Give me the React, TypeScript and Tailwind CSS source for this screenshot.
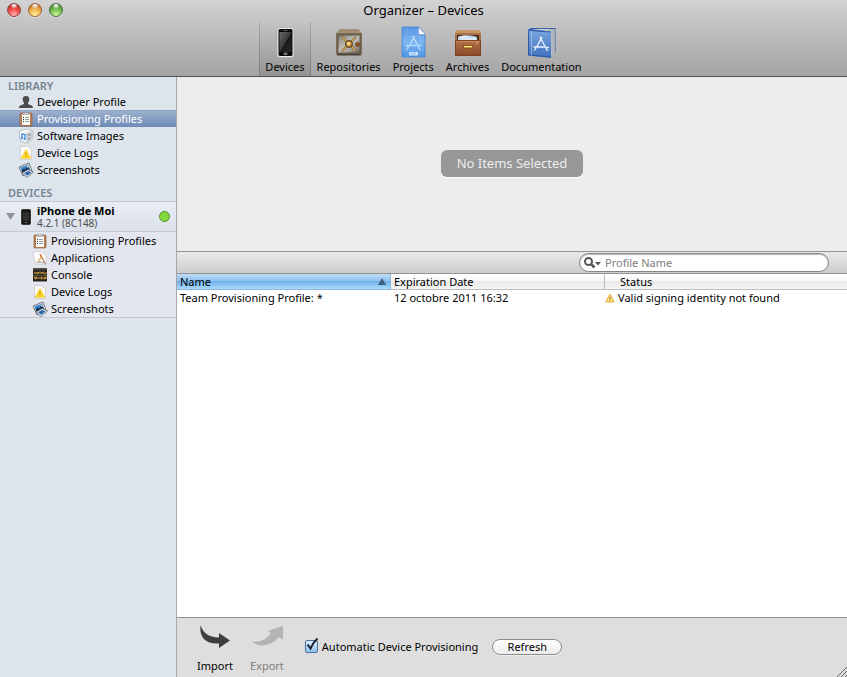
import { useState } from 'react';
import type { ReactNode } from 'react';
import clsx from 'clsx';

interface IconProps {
  className?: string;
}

interface NavItem {
  id: string;
  label: string;
  icon: ReactNode;
}

function DeviceIcon() {
  return (
    <svg viewBox="0 0 34 34" className="size-[34px]" aria-hidden="true">
      <defs>
        <linearGradient id="phone-screen" x1="0" y1="0" x2="1" y2="1">
          <stop offset="0" stopColor="#6a6a6a" />
          <stop offset="0.5" stopColor="#3a3a3a" />
          <stop offset="0.52" stopColor="#1a1a1a" />
          <stop offset="1" stopColor="#262626" />
        </linearGradient>
      </defs>
      <rect x="9" y="2.500" width="17" height="30" rx="3" fill="#e4e9ee" stroke="#a7abb0" strokeWidth="0.7" />
      <rect x="10.500" y="4" width="14" height="27" rx="1.500" fill="#0b0b0b" />
      <rect x="11.500" y="7" width="12" height="20" fill="url(#phone-screen)" />
      <rect x="15.500" y="5" width="4" height="1" fill="#555" />
      <rect x="16" y="28" width="3" height="1.5" rx="0.5" fill="none" stroke="#bbb" strokeWidth="0.8" />
    </svg>
  );
}

function SafeIcon() {
  return (
    <svg viewBox="0 0 34 34" className="size-[34px]" aria-hidden="true">
      <defs>
        <linearGradient id="safe-door" x1="0" y1="0" x2="1" y2="1">
          <stop offset="0" stopColor="#85817a" />
          <stop offset="0.5" stopColor="#c6c3bd" />
          <stop offset="1" stopColor="#6f6b64" />
        </linearGradient>
      </defs>
      <path d="M7.500 4h19L30 8.500H4z" fill="#a08f74" />
      <path d="M4 8h26v21.500H4z" fill="#7d6e55" />
      <path d="M5 29h24v1.500H5z" fill="#4b4436" />
      <rect x="6" y="10" width="22" height="18" fill="url(#safe-door)" stroke="#4f483b" strokeWidth="0.800" />
      <g stroke="#4a3a20" strokeWidth="2.200" strokeLinecap="round">
        <path d="M10.500 12.500l13 13M23.500 12.500l-13 13" />
      </g>
      <g stroke="#e9b95c" strokeWidth="1.400" strokeLinecap="round">
        <path d="M10.500 12.500l13 13M23.500 12.500l-13 13" />
      </g>
      <circle cx="17" cy="19" r="3.400" fill="#d49a3a" stroke="#3a2e1c" />
      <circle cx="16.500" cy="18.500" r="1.400" fill="#ffe5a0" />
      <circle cx="25.500" cy="19.500" r="1.900" fill="#a05a24" stroke="#4a2a12" strokeWidth="0.700" />
    </svg>
  );
}

function BlueprintIcon() {
  return (
    <svg viewBox="0 0 34 34" className="size-[34px]" aria-hidden="true">
      <defs>
        <linearGradient id="blueprint" x1="0" y1="0" x2="0" y2="1">
          <stop offset="0" stopColor="#5a96e2" />
          <stop offset="0.5" stopColor="#7ab4f2" />
          <stop offset="1" stopColor="#4a94e6" />
        </linearGradient>
      </defs>
      <path d="M6 2h17l6 7v23H6z" fill="url(#blueprint)" stroke="#4a82cc" strokeWidth="0.800" />
      <path d="M22.500 2l7 7.500H24q-1.500 0-1.500-1.500z" fill="#f6faff" stroke="#6590c8" strokeWidth="0.500" />
      <g stroke="#8fbff3" strokeWidth="0.400">
        <path d="M6 12h22M6 25h22M11 3v29M24 10v22" />
      </g>
      <g stroke="#b9d8fb" strokeWidth="1.500" fill="none">
        <path d="M16.500 11l7.500 13.500M18.500 11l-5 9.500M12.500 21.500L11 24.500M9.500 20.500h11M22.500 20.500h3" />
      </g>
      <path d="M13 27h9v3.500h-9z" fill="#cfe4fd" />
      <path d="M15 27.500v2M17 28v2M19 27.500v2" stroke="#6ca5e8" strokeWidth="0.800" />
    </svg>
  );
}

function CabinetIcon() {
  return (
    <svg viewBox="0 0 34 34" className="size-[34px]" aria-hidden="true">
      <defs>
        <linearGradient id="drawer" x1="0" y1="0" x2="0" y2="1">
          <stop offset="0" stopColor="#b5734a" />
          <stop offset="1" stopColor="#8c4a28" />
        </linearGradient>
      </defs>
      <path d="M6 5h22l2 3.500V31H4V8.500z" fill="#a96f47" />
      <path d="M6 5h22l1.500 3H4.500z" fill="#c9966a" />
      <path d="M6 10h22v6H6z" fill="#4d3020" />
      <path d="M7 15.500V12q1-1 3-1l3-.8 6 .3 3 .5q3 0 4 1.500v3z" fill="#c3daf0" />
      <path d="M8.500 12.500q5-1.500 9-.5M11 14h14" stroke="#fff" strokeWidth="0.900" fill="none" />
      <rect x="4.500" y="15.500" width="25" height="15" fill="url(#drawer)" stroke="#7c4424" />
      <path d="M5 16.500h24" stroke="#cf9367" strokeWidth="0.700" />
      <rect x="12.500" y="20.500" width="9" height="2.500" fill="#f4c341" stroke="#7a4511" strokeWidth="0.700" />
      <path d="M13 21.500h8" stroke="#fff0a8" strokeWidth="0.800" />
      <circle cx="26" cy="18" r="0.700" fill="#eccbaa" />
    </svg>
  );
}

function BookIcon() {
  return (
    <svg viewBox="0 0 34 34" className="size-[34px]" aria-hidden="true">
      <defs>
        <linearGradient id="book-cover" x1="0" y1="0" x2="0" y2="1">
          <stop offset="0" stopColor="#7aa5dd" />
          <stop offset="1" stopColor="#3e70bf" />
        </linearGradient>
        <linearGradient id="book-pages" x1="0" y1="0" x2="1" y2="0">
          <stop offset="0" stopColor="#fff" />
          <stop offset="1" stopColor="#a9adb2" />
        </linearGradient>
      </defs>
      <path d="M4 4.500l3-1.500h24.500V27.500l-4 3z" fill="#355fa8" />
      <path d="M8 4h23v24l-4 3.500V6.500z" fill="url(#book-pages)" />
      <path d="M4 5l23 1.500V33L4 30.500z" fill="url(#book-cover)" />
      <path d="M4.500 5.500v24.500l22 2" stroke="#2e58a2" fill="none" />
      <path d="M5 5.500l21.500 1.500" stroke="#2f5ea9" />
      <path d="M7.500 6v24.500" stroke="#9fc2ec" strokeWidth="0.800" />
      <g stroke="#eaf3ff" strokeWidth="1.400" fill="none">
        <path d="M16 12l7.500 14M18 12l-5 9.500M12 23l-1.500 2.500M9.500 22h11M22.500 22.500h2.500" />
      </g>
    </svg>
  );
}

function PersonIcon() {
  return (
    <svg viewBox="0 0 16 16" className="size-4 shrink-0" aria-hidden="true">
      <path
        d="M8 2c2.500 0 3.500 1.500 3.300 4-.2 1.500-.8 2-1.300 3v1c2 1 5 1 5 4H1c0-3 3-3 5-4V9C5.500 8 4.900 7.500 4.700 6 4.500 3.500 5.500 2 8 2z"
        fill="#4b4b4d"
      />
    </svg>
  );
}

function ClipboardIcon() {
  return (
    <svg viewBox="0 0 16 16" className="size-4 shrink-0" aria-hidden="true">
      <rect x="2" y="2" width="12" height="13" rx="1" fill="#b87c56" stroke="#9c6242" strokeWidth="0.700" />
      <path d="M4 3h8v11H4z" fill="#fbfbf8" />
      <path d="M5 3.500V2h2q1-2 2 0h2v1.500z" fill="#d4d6d9" stroke="#87898d" strokeWidth="0.500" />
      <path d="M5 6.500h1M5 8.500h1M5 10.500h1" stroke="#333" />
      <path d="M7 6.500h4M7 8.500h4M7 10.500h4" stroke="#9a9a9a" />
    </svg>
  );
}

function ImageBoxIcon() {
  return (
    <svg viewBox="0 0 16 16" className="size-4 shrink-0" aria-hidden="true">
      <path d="M1 3l7-2 7 2-1 8.500L8 15.500 2 12z" fill="#f3f5f8" stroke="#a4a9af" strokeWidth="0.700" />
      <path d="M8 5l6.500-2-.8 8.300L8 15z" fill="#ccd1d7" />
      <path d="M10 6.500l2.500-.8-.3 5L10 12z" fill="#8a929c" />
      <path d="M10.500 8l1.500-.5v2l-1.500.6z" fill="#eceff2" />
      <path d="M4 10V6l3 .5V11" stroke="#2f83dd" strokeWidth="1.200" fill="none" />
      <circle cx="3.700" cy="10.300" r="1" fill="#2f83dd" />
      <circle cx="6.500" cy="11" r="1" fill="#2f83dd" />
    </svg>
  );
}

function LogIcon() {
  return (
    <svg viewBox="0 0 16 16" className="size-4 shrink-0" aria-hidden="true">
      <path d="M2.500 1.500h8l3 3v10h-11z" fill="#fcfcfa" stroke="#d2d3d2" />
      <path d="M10.500 1.500v3h3z" fill="#dedede" />
      <path d="M8 4.500l4.800 8.700H3.200z" fill="#ffd92b" stroke="#f5c722" strokeWidth="0.700" />
      <path d="M8 7.500v3M8 11.300v1" stroke="#b08a18" />
    </svg>
  );
}

function PhotosIcon() {
  return (
    <svg viewBox="0 0 16 16" className="size-4 shrink-0" aria-hidden="true">
      <path d="M1 5l10-4 3 8-9 5z" fill="#f4f5f6" stroke="#4f545b" strokeWidth="0.800" />
      <path d="M2.300 5.600l8-3.200 2.300 6.200-7.200 3.900z" fill="#3b84cf" />
      <path d="M3.500 8.500l2.500-2 1.500 1 1.500-3 3 4-6.500 3.800z" fill="#142c4c" />
      <circle cx="9.600" cy="4.600" r="1" fill="#f3d9a6" />
      <path d="M4 11l6-3.500 5.500 2.500L9 15.500z" fill="#e9edf0" stroke="#4f545b" strokeWidth="0.700" />
      <path d="M6 11.200l4-2.300 3.500 1.500-4.300 3.300z" fill="#2b66a9" />
    </svg>
  );
}

function AppsIcon() {
  return (
    <svg viewBox="0 0 16 16" className="size-4 shrink-0" aria-hidden="true">
      <path d="M1 2l8-.5 5 4 .5 9-11-.5z" fill="#fdfdfd" stroke="#c5c5c8" strokeWidth="0.700" />
      <path d="M8.500 5l5 9" stroke="#c49a6a" strokeWidth="1.600" />
      <path d="M9.500 7L5 13" stroke="#d9a548" strokeWidth="1.200" />
      <path d="M6 12l8 1" stroke="#b3b3b8" strokeWidth="1.300" />
      <path d="M8 4l1.500 3" stroke="#d9704f" strokeWidth="1.300" />
    </svg>
  );
}

function ConsoleIcon() {
  return (
    <svg viewBox="0 0 16 16" className="size-4 shrink-0" aria-hidden="true">
      <rect x="1" y="1" width="14" height="14" fill="#23221e" />
      <path d="M1 2h14" stroke="#77756f" />
      <path d="M2 7l1-2 1 2 1-2v2h1V5l1 2V5h2v2l1-2 1 2V5h1v2h2V5" stroke="#b98a35" strokeWidth="0.900" fill="none" />
      <path d="M2 10h1v2h1v-2h1v2M7 10v2M9 10h1v2H9zM12 10v2h1v-2h1v2" stroke="#d9a136" fill="none" />
      <path d="M1 8.500h14" stroke="#57503c" />
      <path d="M1 14.500h14" stroke="#8b8980" />
    </svg>
  );
}

function MiniPhoneIcon() {
  return (
    <svg viewBox="0 0 10 16" className="h-4 w-[10px] shrink-0" aria-hidden="true">
      <rect x="0.500" y="0.500" width="9" height="15" rx="1" fill="#161616" stroke="#3a3a3a" />
      <rect x="2" y="3" width="6" height="9" fill="#2f2f2f" />
      <path d="M4 13.500h2" stroke="#777" />
    </svg>
  );
}

function WarningIcon() {
  return (
    <svg viewBox="0 0 10 10" className="size-[10px] shrink-0" aria-hidden="true">
      <path d="M5 1l4.200 8H0.800z" fill="#ffe08a" stroke="#e8a93a" strokeLinejoin="round" />
      <path d="M5 3.800v2.400M5 7.200v1" stroke="#8a6420" />
    </svg>
  );
}

function ImportIcon({ className }: IconProps) {
  return (
    <svg viewBox="0 0 32 26" className={className} aria-hidden="true">
      <path d="M1.500 1C4 9 9 13 20 13.500V9l11 7.500L20 24v-4.500C7 20 0 14 1.500 1z" fill="currentColor" />
    </svg>
  );
}

function ExportIcon({ className }: IconProps) {
  return (
    <svg viewBox="0 0 32 26" className={className} aria-hidden="true">
      <path d="M1 17.500c9 1 14-2 19-8.500l-3.500-2L32 2v14l-4-3C21 21 9 25 1 17.500z" fill="currentColor" />
    </svg>
  );
}

const toolbar: NavItem[] = [
  { id: 'devices', label: 'Devices', icon: <DeviceIcon /> },
  { id: 'repositories', label: 'Repositories', icon: <SafeIcon /> },
  { id: 'projects', label: 'Projects', icon: <BlueprintIcon /> },
  { id: 'archives', label: 'Archives', icon: <CabinetIcon /> },
  { id: 'documentation', label: 'Documentation', icon: <BookIcon /> },
];

const library: NavItem[] = [
  { id: 'developer', label: 'Developer Profile', icon: <PersonIcon /> },
  { id: 'profiles', label: 'Provisioning Profiles', icon: <ClipboardIcon /> },
  { id: 'images', label: 'Software Images', icon: <ImageBoxIcon /> },
  { id: 'logs', label: 'Device Logs', icon: <LogIcon /> },
  { id: 'screenshots', label: 'Screenshots', icon: <PhotosIcon /> },
];

const deviceItems: NavItem[] = [
  { id: 'device-profiles', label: 'Provisioning Profiles', icon: <ClipboardIcon /> },
  { id: 'device-apps', label: 'Applications', icon: <AppsIcon /> },
  { id: 'device-console', label: 'Console', icon: <ConsoleIcon /> },
  { id: 'device-logs', label: 'Device Logs', icon: <LogIcon /> },
  { id: 'device-screenshots', label: 'Screenshots', icon: <PhotosIcon /> },
];

const profiles = [
  {
    name: 'Team Provisioning Profile: *',
    expires: '12 octobre 2011 16:32',
    status: 'Valid signing identity not found',
  },
];

function WindowControls() {
  const base = 'size-[14px] rounded-full border shadow-[0_1px_0_#ddd]';
  return (
    <div className="absolute left-[7px] top-[3px] flex gap-[7px]">
      <button
        aria-label="Close"
        className={clsx(
          base,
          'border-[#8a4540] bg-[radial-gradient(circle_at_50%_10%,#fff_5%,transparent_30%),radial-gradient(circle_at_50%_90%,#ffb5b0,#f04641_50%,#8d2a20)]'
        )}
      />
      <button
        aria-label="Minimize"
        className={clsx(
          base,
          'border-[#a06238] bg-[radial-gradient(circle_at_50%_10%,#fff_5%,transparent_30%),radial-gradient(circle_at_50%_90%,#fff09a,#f0b048_50%,#a04c20)]'
        )}
      />
      <button
        aria-label="Zoom"
        className={clsx(
          base,
          'border-[#47713a] bg-[radial-gradient(circle_at_50%_10%,#fff_5%,transparent_30%),radial-gradient(circle_at_50%_90%,#cef59b,#72bd50_50%,#2e6423)]'
        )}
      />
    </div>
  );
}

function SidebarRow({
  item,
  nested,
  selected,
  onSelect,
}: {
  item: NavItem;
  nested?: boolean;
  selected: boolean;
  onSelect: (id: string) => void;
}) {
  return (
    <li>
      <button
        onClick={() => onSelect(item.id)}
        className={clsx(
          'flex h-[17px] w-full items-center gap-[3px] whitespace-nowrap text-left',
          nested ? 'pl-8' : 'pl-[18px]',
          selected &&
            'bg-linear-to-b from-[#a0b2cf] to-[#6e8bb7] text-white shadow-[inset_0_1px_0_#8fa5c6]'
        )}
      >
        {item.icon}
        {item.label}
      </button>
    </li>
  );
}

export default function App() {
  const [section, setSection] = useState('devices');
  const [selected, setSelected] = useState('profiles');
  const [query, setQuery] = useState('');
  const [automatic, setAutomatic] = useState(true);

  const visible = profiles.filter((p) => p.name.toLowerCase().includes(query.toLowerCase()));

  return (
    <div className="flex min-h-screen flex-col bg-[#ededed] font-['Noto_Sans',sans-serif] text-[11px] leading-4 text-black">
      <header className="relative border-b border-[#515151] bg-linear-to-b from-[#d2d2d2] to-[#a4a4a4]">
        <WindowControls />
        <h1 className="h-[22px] text-center text-[13px] leading-5">Organizer – Devices</h1>
        <nav className="flex h-[54px] justify-center">
          {toolbar.map((item) => (
            <button
              key={item.id}
              onClick={() => setSection(item.id)}
              className={clsx(
                'flex flex-col items-center border-x px-[5px] pt-[3px]',
                section === item.id
                  ? 'border-black/15 bg-linear-to-b from-transparent to-black/10'
                  : 'border-transparent'
              )}
            >
              {item.icon}
              <span>{item.label}</span>
            </button>
          ))}
        </nav>
      </header>

      <div className="flex flex-1">
        <aside className="w-[177px] shrink-0 border-r border-[#a8a8a8] bg-[#dde4ec]">
          <h2 className="h-4 pl-2 font-semibold leading-[18px] text-[#768493]">LIBRARY</h2>
          <ul>
            {library.map((item) => (
              <SidebarRow key={item.id} item={item} selected={selected === item.id} onSelect={setSelected} />
            ))}
          </ul>

          <h2 className="mt-[6px] h-[17px] pl-2 font-semibold leading-[18px] text-[#768493]">DEVICES</h2>
          <section className="border-y border-[#c3c7cd] bg-[#e3e6ee]">
            <div className="flex h-[30px] items-center border-b border-[#c9ccd2] bg-linear-to-b from-[#e9edf4] to-[#dbe1ea] px-[6px]">
              <button aria-label="Collapse iPhone de Moi" className="mr-[6px]">
                <svg viewBox="0 0 9 7" className="h-[7px] w-[9px]" aria-hidden="true">
                  <path d="M0 0h9L4.500 7z" fill="#8b939d" />
                </svg>
              </button>
              <MiniPhoneIcon />
              <div className="ml-[6px] flex-1">
                <p className="font-bold leading-3">iPhone de Moi</p>
                <p className="text-[10px] leading-3 text-[#4d4d4d]">4.2.1 (8C148)</p>
              </div>
              <span className="size-[11px] rounded-full border border-[#558b35] bg-[#83d83c]" />
            </div>
            <ul>
              {deviceItems.map((item) => (
                <SidebarRow
                  key={item.id}
                  item={item}
                  nested
                  selected={selected === item.id}
                  onSelect={setSelected}
                />
              ))}
            </ul>
          </section>
        </aside>

        <main className="flex min-w-0 flex-1 flex-col">
          <div className="flex h-[174px] items-center justify-center pb-[2px]">
            <p className="rounded-md bg-[#979797] px-4 text-[13px] leading-[27px] text-[#ededed] shadow-[0_1px_0_#fff]">
              No Items Selected
            </p>
          </div>

          <div className="flex h-[23px] items-center justify-end border-y border-[#949494] bg-linear-to-b from-[#eaeaea] to-[#cdcdcd] pr-[18px]">
            <label className="flex h-[19px] w-[250px] items-center rounded-full border border-[#858585] bg-white pl-1 shadow-[inset_0_1px_1px_#bbb]">
              <svg viewBox="0 0 18 12" className="h-3 w-[18px] shrink-0" aria-hidden="true">
                <circle cx="4.500" cy="4.500" r="3.500" fill="none" stroke="#555" strokeWidth="2" />
                <path d="M7 7l3.500 3.500" stroke="#555" strokeWidth="2.500" />
                <path d="M11 5h6L14 8.500z" fill="#555" />
              </svg>
              <input
                type="text"
                aria-label="Filter profiles"
                placeholder="Profile Name"
                value={query}
                onChange={(e) => setQuery(e.target.value)}
                className="ml-[3px] w-full bg-transparent outline-none placeholder:text-[#808080]"
              />
            </label>
          </div>

          <div className="flex-1 bg-white">
            <table className="w-full table-fixed border-separate border-spacing-0 text-left">
              <colgroup>
                <col className="w-[214px]" />
                <col className="w-[214px]" />
                <col />
              </colgroup>
              <thead>
                <tr className="leading-[15px]">
                  <th
                    aria-sort="ascending"
                    className="border-b border-r border-[#8fb7dd] bg-[linear-gradient(#c0dcf5,#8fc3f0_45%,#71b2ec_50%,#abdafb)] p-0 pl-[3px] font-normal"
                  >
                    <span className="flex items-center justify-between pr-1">
                      Name
                      <svg viewBox="0 0 8 7" className="h-[7px] w-2" aria-hidden="true">
                        <path d="M4 0l4 7H0z" fill="#3c5b7d" />
                      </svg>
                    </span>
                  </th>
                  <th className="border-b border-r border-[#bdbdbd] bg-[linear-gradient(#fff,#f7f7f7_50%,#eaeaea_50%,#f5f5f5)] p-0 pl-[3px] font-normal">
                    Expiration Date
                  </th>
                  <th className="border-b border-[#bdbdbd] bg-[linear-gradient(#fff,#f7f7f7_50%,#eaeaea_50%,#f5f5f5)] p-0 pl-[15px] font-normal">
                    Status
                  </th>
                </tr>
              </thead>
              <tbody>
                {visible.map((profile) => (
                  <tr key={profile.name}>
                    <td className="p-0 pl-[3px]">{profile.name}</td>
                    <td className="p-0 pl-[3px]">{profile.expires}</td>
                    <td className="p-0">
                      <span className="flex items-center gap-[3px]">
                        <WarningIcon />
                        {profile.status}
                      </span>
                    </td>
                  </tr>
                ))}
              </tbody>
            </table>
          </div>

          <footer className="relative flex h-[60px] items-center border-t border-[#8e8e8e] bg-[#dedede] pl-5">
            <button className="flex flex-col items-center gap-2 pt-[2px]">
              <ImportIcon className="h-[26px] w-8 text-[#3e3e3e]" />
              Import
            </button>
            <button disabled className="ml-[17px] flex flex-col items-center gap-2 pt-[2px] text-[#808080]">
              <ExportIcon className="h-[26px] w-8 text-[#b3b3b3]" />
              Export
            </button>
            <label className="ml-[21px] flex items-center gap-1 pb-[2px]">
              <span className="relative size-[13px]">
                <input
                  type="checkbox"
                  checked={automatic}
                  onChange={(e) => setAutomatic(e.target.checked)}
                  className="block size-[13px] appearance-none rounded-[2px] border border-[#4f7199] bg-linear-to-b from-[#e0effc] to-[#8bc2f4]"
                />
                {automatic && (
                  <svg
                    viewBox="0 0 14 15"
                    className="pointer-events-none absolute -top-[3px] left-0 h-[15px] w-[14px]"
                    aria-hidden="true"
                  >
                    <path d="M2.500 7.500L5.500 11.500Q8 5.500 12.500 1.500" fill="none" stroke="#18202d" strokeWidth="2" />
                  </svg>
                )}
              </span>
              Automatic Device Provisioning
            </label>
            <div className="pb-[2px] pl-[14px]">
              <button className="block h-4 w-[70px] rounded-full border border-[#8d8d8d] bg-linear-to-b from-white to-[#ececec] leading-[14px] shadow-[0_1px_0_#eee]">
                Refresh
              </button>
            </div>
            <svg viewBox="0 0 10 10" className="absolute bottom-0 right-0 size-[10px]" aria-hidden="true">
              <path d="M0 10L10 0M4 10l6-6M8 10l2-2" stroke="#666" />
            </svg>
          </footer>
        </main>
      </div>
    </div>
  );
}
